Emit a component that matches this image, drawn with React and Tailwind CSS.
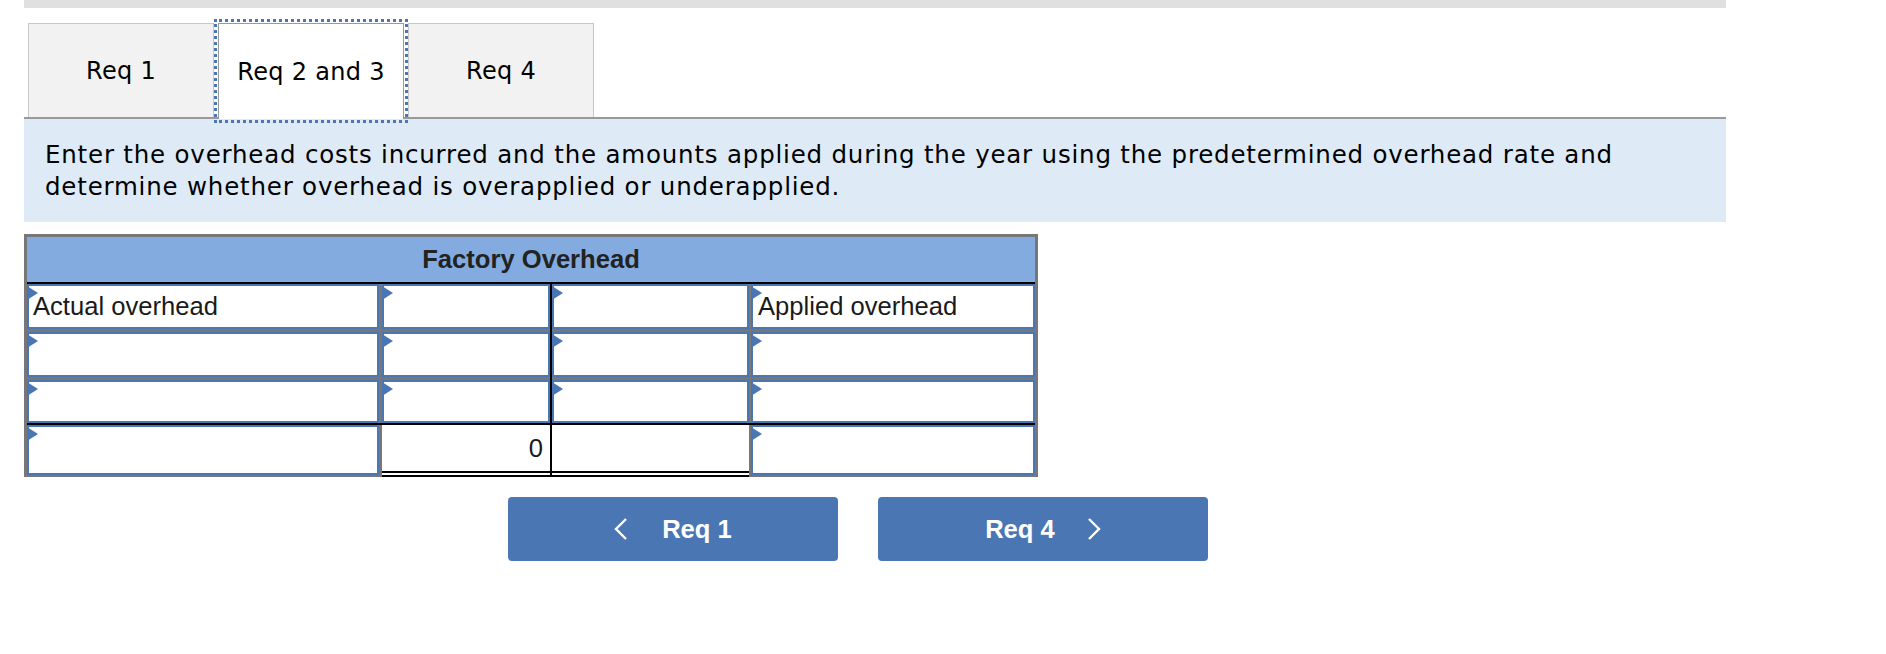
import React from 'react';

const verdana = "font-['DejaVu_Sans',Verdana,sans-serif]";
const arial = "font-['Liberation_Sans',Arial,sans-serif]";

const Flag = () => (
  <span className="absolute left-[-2px] top-0 block w-0 h-0 border-y-[7px] border-y-transparent border-l-[11px] border-l-[#4a76b4]" />
);

const InputCell = ({ text, pad = 'pl-1', h = 'h-[45px]' }) => (
  <div className={`relative ${h} border-2 border-[#4a76b4] bg-white flex items-center ${pad} text-[25.6px] text-[#1a1a1a] ${arial}`}>
    <Flag />
    {text}
  </div>
);

const Row = ({ cells }) => (
  <div className="flex">
    <div className="w-[352px] border-b-[3px] border-[#777]">
      <InputCell text={cells[0]} />
    </div>
    <div className="w-[3px] bg-[#777]" />
    <div className="w-[168px] border-b-[3px] border-[#777]">
      <InputCell text={cells[1]} />
    </div>
    <div className="w-[2px] bg-black" />
    <div className="w-[197px] border-b-[3px] border-[#777]">
      <InputCell text={cells[2]} />
    </div>
    <div className="w-[2px] bg-[#777]" />
    <div className="w-[284px] border-b-[3px] border-[#777]">
      <InputCell text={cells[3]} pad="pl-[5px]" />
    </div>
  </div>
);

const Chevron = ({ dir }) => (
  <svg width="14" height="22" viewBox="0 0 14 22" fill="none">
    <polyline
      points={dir === 'left' ? '12,1 2,11 12,21' : '2,1 12,11 2,21'}
      stroke="white"
      strokeWidth="2.4"
      strokeLinejoin="miter"
    />
  </svg>
);

export default function App() {
  const tabs = ['Req 1', 'Req 2 and 3', 'Req 4'];

  return (
    <div className="w-[1886px] h-[654px] bg-white">
      <div className="ml-[24px] w-[1702px]">
        <div className="h-[8px] bg-[#e0e0e0]" />

        <div className="flex items-end h-[111px] border-b-2 border-[#999] pl-[4px]">
          {tabs.map((t, i) =>
            i === 1 ? (
              <div
                key={t}
                className={`w-[186px] h-[96px] mx-[4px] -mb-[2px] bg-white border-[1.5px] border-b-0 border-[#999] outline-[3px] outline-dotted outline-[#4a76b4] outline-offset-1 flex items-center justify-center text-[24px] tracking-[0.3px] text-black ${verdana}`}
              >
                {t}
              </div>
            ) : (
              <div
                key={t}
                className={`w-[186px] h-[94px] bg-[#f2f2f2] border border-b-0 border-[#c8c8c8] flex items-center justify-center text-[24px] tracking-[0.3px] text-black ${verdana}`}
              >
                {t}
              </div>
            )
          )}
        </div>

        <div className={`bg-[#deebf7] pt-[20px] pb-[19px] pl-[21px] text-[24.5px] tracking-[0.8px] leading-[32px] text-black ${verdana}`}>
          Enter the overhead costs incurred and the amounts applied during the year using the predetermined overhead rate and
          <br />
          determine whether overhead is overapplied or underapplied.
        </div>

        <div className="mt-[12px] w-[1014px] border-x-[3px] border-t-[3px] border-[#777]">
          <div className={`h-[47px] bg-[#83abdf] border-b-2 border-black flex items-center justify-center font-bold text-[25.6px] text-[#222] ${arial}`}>
            Factory Overhead
          </div>
          <Row cells={['Actual overhead', '', '', 'Applied overhead']} />
          <Row cells={['', '', '', '']} />
          <div className="flex border-b-2 border-black">
            <div className="w-[352px]">
              <InputCell text="" h="h-[43px]" />
            </div>
            <div className="w-[3px] bg-[#777]" />
            <div className="w-[168px]">
              <InputCell text="" h="h-[43px]" />
            </div>
            <div className="w-[2px] bg-black" />
            <div className="w-[197px]">
              <InputCell text="" h="h-[43px]" />
            </div>
            <div className="w-[2px] bg-[#777]" />
            <div className="w-[284px]">
              <InputCell text="" h="h-[43px]" pad="pl-[5px]" />
            </div>
          </div>
          <div className="flex">
            <div className="w-[352px] border-b-2 border-[#777]">
              <InputCell text="" h="h-[50px]" />
            </div>
            <div className="w-[3px] bg-[#777]" />
            <div className={`w-[168px] h-[52px] bg-white border-b-[6px] border-double border-black flex items-center justify-end pr-[7px] text-[25.6px] text-[#1a1a1a] ${arial}`}>
              0
            </div>
            <div className="w-[2px] bg-black" />
            <div className="w-[197px] h-[52px] bg-white border-b-[6px] border-double border-black" />
            <div className="w-[2px] bg-[#777]" />
            <div className="w-[284px] border-b-2 border-[#777]">
              <InputCell text="" h="h-[50px]" pad="pl-[5px]" />
            </div>
          </div>
        </div>

        <div className={`flex gap-[40px] pl-[484px] mt-[20px] ${arial}`}>
          <button className="w-[330px] h-[64px] bg-[#4a76b4] rounded-[4px] flex items-center justify-center gap-[34px] text-white font-bold text-[25.6px]">
            <Chevron dir="left" />
            <span>Req 1</span>
          </button>
          <button className="w-[330px] h-[64px] bg-[#4a76b4] rounded-[4px] flex items-center justify-center gap-[32px] text-white font-bold text-[25.6px]">
            <span>Req 4</span>
            <Chevron dir="right" />
          </button>
        </div>
      </div>
    </div>
  );
}
